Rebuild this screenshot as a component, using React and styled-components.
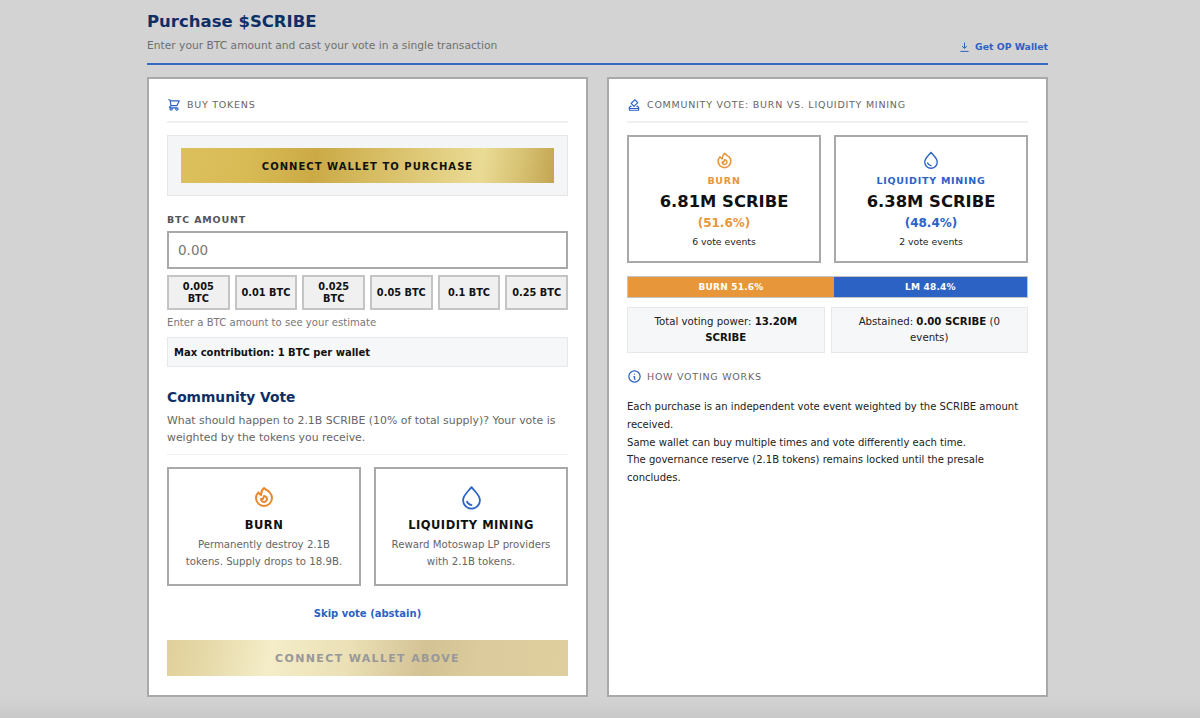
import React from "react";
import styled, { createGlobalStyle } from "styled-components";
import { HiOutlineShoppingCart, HiOutlineFire, HiOutlineInformationCircle } from "react-icons/hi";
import { MdOutlineHowToVote } from "react-icons/md";

const Global = createGlobalStyle`
  html, body { margin: 0; padding: 0; }
  body {
    height: 718px;
    overflow: hidden;
    background: linear-gradient(180deg, #d3d3d3 0, #d3d3d3 697px, #c9c9c9 718px);
    font-family: "DejaVu Sans", Verdana, sans-serif;
    color: #111;
  }
`;
const Page = styled.div`
  width: 901px;
  margin-left: 147px;
`;
const Header = styled.header`
  display: flex;
  justify-content: space-between;
  align-items: flex-end;
  height: 65px;
  box-sizing: border-box;
  border-bottom: 2px solid #356bc4;
  padding: 10px 0 10px;
  margin-bottom: 12px;
`;
const Title = styled.h1`
  margin: 0 0 6px;
  font-size: 16.5px;
  line-height: 22px;
  font-weight: 700;
  color: #0e2f66;
`;
const Subtitle = styled.p`
  margin: 0;
  font-size: 10.7px;
  line-height: 14px;
  color: #6f6f6f;
`;
const WalletLink = styled.a`
  display: flex;
  align-items: center;
  gap: 5px;
  margin-bottom: -1px;
  font-size: 9.3px;
  line-height: 14px;
  font-weight: 700;
  color: #2b62c4;
`;
const Columns = styled.div`
  display: grid;
  grid-template-columns: 441px 441px;
  gap: 19px;
`;
const Panel = styled.section`
  box-sizing: border-box;
  height: 620px;
  background: #fff;
  border: 2px solid #a9a9a9;
  padding: 17px 18px 18px;
`;
const SectionHead = styled.div`
  display: flex;
  align-items: center;
  gap: 6px;
  height: 17px;
  font-size: 9.5px;
  letter-spacing: 0.75px;
  color: #666;
  svg { color: #2b62c4; flex: none; }
`;
const PanelHead = styled(SectionHead)`
  padding-bottom: 8px;
  border-bottom: 2px solid #f0f0f0;
  margin-bottom: 12px;
`;
const ConnectBox = styled.div`
  background: #f4f5f7;
  border: 1px solid #e6e6e6;
  padding: 12px 13px;
`;
const GoldButton = styled.button`
  display: block;
  width: 100%;
  height: 35px;
  padding: 2px 0 0;
  border: 0;
  font-family: inherit;
  font-size: 10px;
  font-weight: 700;
  letter-spacing: 1.03px;
  color: #111;
  background: linear-gradient(100deg, #dcc05c 0%, #d8bb55 18%, #cbaa46 36%, #dcc571 60%, #eadb95 80%, #d8c374 90%, #c2a552 100%);
`;
const FieldLabel = styled.div`
  margin-top: 17px;
  font-size: 9.5px;
  line-height: 14px;
  font-weight: 700;
  letter-spacing: 0.8px;
  color: #555;
`;
const AmountInput = styled.input`
  display: block;
  box-sizing: border-box;
  width: 100%;
  height: 38px;
  margin-top: 4px;
  padding: 0 9px;
  border: 2px solid #a9a9a9;
  font-family: inherit;
  font-size: 13.5px;
  outline: none;
  &::placeholder { color: #777; opacity: 1; }
`;
const Presets = styled.div`
  display: grid;
  grid-template-columns: repeat(6, 1fr);
  gap: 5px;
  margin-top: 6px;
`;
const Preset = styled.button`
  height: 35px;
  padding: 0 2px;
  background: #f0f0f0;
  border: 2px solid #c4c4c4;
  font-family: inherit;
  font-size: 9.8px;
  line-height: 11.5px;
  font-weight: 700;
  color: #111;
`;
const Hint = styled.p`
  margin: 6px 0 7px;
  font-size: 10.1px;
  line-height: 14px;
  color: #777;
`;
const InfoStrip = styled.div`
  background: #f6f7f9;
  border: 1px solid #e8e8e8;
  padding: 0 6px;
  height: 30px;
  line-height: 30px;
  box-sizing: border-box;
  font-size: 10px;
  font-weight: 700;
`;
const VoteTitle = styled.h2`
  margin: 20px 0 0;
  font-size: 13.8px;
  line-height: 20px;
  font-weight: 700;
  color: #0e2f66;
`;
const VoteText = styled.p`
  margin: 5px 0 12px;
  padding-bottom: 8px;
  border-bottom: 1px solid #eee;
  font-size: 10.9px;
  line-height: 17px;
  color: #666;
`;
const CardGrid = styled.div`
  display: grid;
  grid-template-columns: 1fr 1fr;
  gap: 13px;
`;
const IconSlot = styled.div`
  display: flex;
  align-items: center;
  justify-content: center;
  height: ${(p) => p.$height}px;
`;
const VoteCard = styled.div`
  box-sizing: border-box;
  height: 119px;
  border: 2px solid #a9a9a9;
  text-align: center;
  padding-top: 18px;
  color: #111;
  svg { color: ${(p) => p.$color}; flex: none; }
`;
const CardName = styled.div`
  margin-top: 10px;
  font-size: 11.5px;
  line-height: 16px;
  letter-spacing: 0.5px;
  font-weight: 700;
`;
const CardDesc = styled.div`
  margin-top: 4px;
  font-size: 10.2px;
  line-height: 16.5px;
  color: #666;
`;
const SkipLink = styled.a`
  display: block;
  margin: 21px 0 19px;
  text-align: center;
  font-size: 10px;
  line-height: 14px;
  font-weight: 700;
  color: #2b62c4;
`;
const FadedButton = styled.button`
  display: block;
  width: 100%;
  height: 36px;
  border: 0;
  font-family: inherit;
  font-size: 11px;
  font-weight: 700;
  letter-spacing: 1.35px;
  color: #98989a;
  background: linear-gradient(100deg, #e0d09a 0%, #e6d9a8 10%, #f4edc8 26%, #ebe0b6 45%, #d3c294 64%, #dccb9c 78%, #dfcf9f 100%);
`;
const TallyCard = styled.div`
  box-sizing: border-box;
  height: 128px;
  border: 2px solid #a9a9a9;
  text-align: center;
  padding-top: 15px;
  color: ${(p) => p.$color};
  svg { flex: none; }
`;
const TallyName = styled.div`
  margin-top: 6px;
  font-size: 9.5px;
  line-height: 14px;
  font-weight: 700;
  letter-spacing: 0.75px;
`;
const TallyAmount = styled.div`
  margin-top: 3px;
  font-size: 16.4px;
  line-height: 22px;
  font-weight: 700;
  color: #111;
`;
const TallyPct = styled.div`
  margin-top: 2px;
  font-size: 12px;
  line-height: 16px;
  font-weight: 700;
`;
const TallyEvents = styled.div`
  margin-top: 4px;
  font-size: 9.3px;
  line-height: 14px;
  color: #222;
`;
const VoteBar = styled.div`
  display: flex;
  height: 22px;
  margin-top: 13px;
  box-sizing: border-box;
  border: 1px solid #c4c4c4;
`;
const BarPart = styled.div`
  display: flex;
  align-items: center;
  justify-content: center;
  background: ${(p) => p.$color};
  color: #fff;
  font-size: 9px;
  font-weight: 700;
  letter-spacing: 0.2px;
`;
const StatGrid = styled.div`
  display: grid;
  grid-template-columns: 1fr 1fr;
  gap: 6px;
  margin-top: 9px;
`;
const StatBox = styled.div`
  box-sizing: border-box;
  height: 46px;
  padding: 6px 8px;
  background: #f6f7f9;
  border: 1px solid #e8e8e8;
  text-align: center;
  font-size: 10.2px;
  line-height: 16px;
  color: #222;
  b { color: #111; }
`;
const WorksHead = styled(SectionHead)`
  margin-top: 15px;
  gap: 5px;
`;
const Explain = styled.p`
  margin: 13px 0 0;
  font-size: 10.05px;
  line-height: 17.8px;
  color: #222;
`;
const DropIcon = ({ size }) => (
  <svg width={size} height={size} viewBox="0 0 24 24" fill="none" stroke="currentColor" strokeWidth="1.6" strokeLinecap="round" strokeLinejoin="round">
    <path d="M12 2.8C9.2 6.6 4.5 9.8 4.5 14.4a7.5 7.5 0 0 0 15 0C19.5 9.8 14.8 6.6 12 2.8z" />
    <path d="M8 15.6c.6 1.8 2 2.9 4 3.1" />
  </svg>
);
const DownloadIcon = () => (
  <svg width="11" height="11" viewBox="0 0 11 11" fill="none" stroke="currentColor" strokeWidth="1" strokeLinecap="round" strokeLinejoin="round">
    <path d="M5.5 1v5.2M3.4 4.4l2.1 2 2.1-2M1.8 9.4h7.4" />
  </svg>
);

const presets = ["0.005 BTC", "0.01 BTC", "0.025 BTC", "0.05 BTC", "0.1 BTC", "0.25 BTC"];
const ORANGE = "#e8963a";
const BLUE = "#2b62c4";

export default function App() {
  return (
    <Page>
      <Global />
      <Header>
        <div>
          <Title>Purchase $SCRIBE</Title>
          <Subtitle>Enter your BTC amount and cast your vote in a single transaction</Subtitle>
        </div>
        <WalletLink><DownloadIcon />Get OP Wallet</WalletLink>
      </Header>
      <Columns>
        <Panel>
          <PanelHead><HiOutlineShoppingCart size={14} />BUY TOKENS</PanelHead>
          <ConnectBox><GoldButton>CONNECT WALLET TO PURCHASE</GoldButton></ConnectBox>
          <FieldLabel>BTC AMOUNT</FieldLabel>
          <AmountInput placeholder="0.00" />
          <Presets>{presets.map((p) => <Preset key={p}>{p}</Preset>)}</Presets>
          <Hint>Enter a BTC amount to see your estimate</Hint>
          <InfoStrip>Max contribution: 1 BTC per wallet</InfoStrip>
          <VoteTitle>Community Vote</VoteTitle>
          <VoteText>What should happen to 2.1B SCRIBE (10% of total supply)? Your vote is weighted by the tokens you receive.</VoteText>
          <CardGrid>
            <VoteCard $color="#e8882e">
              <IconSlot $height={20}><HiOutlineFire size={24} /></IconSlot>
              <CardName>BURN</CardName>
              <CardDesc>Permanently destroy 2.1B<br />tokens. Supply drops to 18.9B.</CardDesc>
            </VoteCard>
            <VoteCard $color={BLUE}>
              <IconSlot $height={20}><DropIcon size={27} /></IconSlot>
              <CardName>LIQUIDITY MINING</CardName>
              <CardDesc>Reward Motoswap LP providers<br />with 2.1B tokens.</CardDesc>
            </VoteCard>
          </CardGrid>
          <SkipLink>Skip vote (abstain)</SkipLink>
          <FadedButton>CONNECT WALLET ABOVE</FadedButton>
        </Panel>
        <Panel>
          <PanelHead><MdOutlineHowToVote size={14} />COMMUNITY VOTE: BURN VS. LIQUIDITY MINING</PanelHead>
          <CardGrid>
            <TallyCard $color={ORANGE}>
              <IconSlot $height={16}><HiOutlineFire size={19} /></IconSlot>
              <TallyName>BURN</TallyName>
              <TallyAmount>6.81M SCRIBE</TallyAmount>
              <TallyPct>(51.6%)</TallyPct>
              <TallyEvents>6 vote events</TallyEvents>
            </TallyCard>
            <TallyCard $color={BLUE}>
              <IconSlot $height={16}><DropIcon size={20} /></IconSlot>
              <TallyName>LIQUIDITY MINING</TallyName>
              <TallyAmount>6.38M SCRIBE</TallyAmount>
              <TallyPct>(48.4%)</TallyPct>
              <TallyEvents>2 vote events</TallyEvents>
            </TallyCard>
          </CardGrid>
          <VoteBar>
            <BarPart $color={ORANGE} style={{ width: "51.6%" }}>BURN 51.6%</BarPart>
            <BarPart $color={BLUE} style={{ width: "48.4%" }}>LM 48.4%</BarPart>
          </VoteBar>
          <StatGrid>
            <StatBox>Total voting power: <b>13.20M SCRIBE</b></StatBox>
            <StatBox>Abstained: <b>0.00 SCRIBE</b> (0 events)</StatBox>
          </StatGrid>
          <WorksHead><HiOutlineInformationCircle size={15} />HOW VOTING WORKS</WorksHead>
          <Explain>
            Each purchase is an independent vote event weighted by the SCRIBE amount received.<br />
            Same wallet can buy multiple times and vote differently each time.<br />
            The governance reserve (2.1B tokens) remains locked until the presale concludes.
          </Explain>
        </Panel>
      </Columns>
    </Page>
  );
}
